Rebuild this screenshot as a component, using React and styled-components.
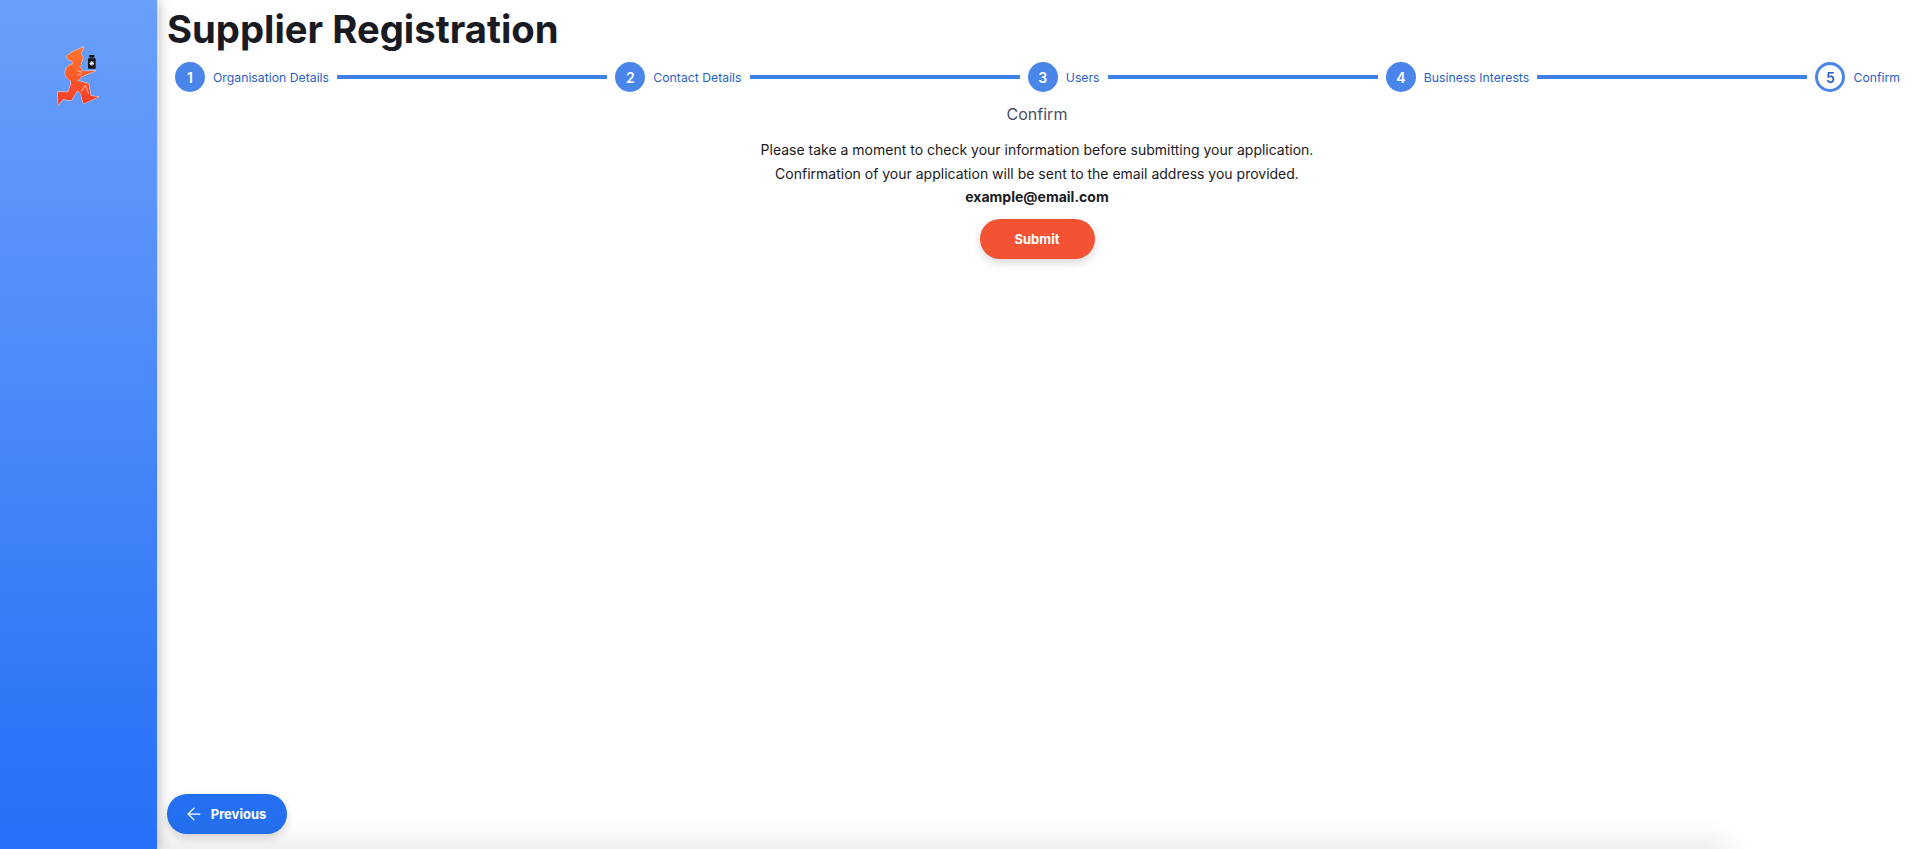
import React from 'react';
import styled, {createGlobalStyle} from 'styled-components';
import {ArrowLeft} from 'lucide-react';

const GlobalStyle = createGlobalStyle`
    html, body {
        margin: 0;
        padding: 0;
        background: white;
        font-family: Inter, "Liberation Sans", sans-serif;
    }
`;

const Page = styled.div`
    position: relative;
    display: flex;
    height: 100vh;
    overflow: hidden;
`;

const Sidebar = styled.aside`
    width: 157px;
    flex-shrink: 0;
    box-sizing: border-box;
    padding: 35px 0 0 40px;
    background: linear-gradient(180deg, #6a9ffa 0%, #2570f7 100%);
    box-shadow: 2px 0 12px rgba(0, 0, 0, 0.25);
    z-index: 2;
`;

const Main = styled.main`
    flex: 1;
    min-width: 0;
    display: flex;
    flex-direction: column;
    padding: 0 13px 15px 10px;
`;

const Title = styled.h1`
    margin: 6px 0 0;
    font-size: 38.25px;
    line-height: 46px;
    font-weight: 700;
    color: #1a1a23;
`;

const Stepper = styled.div`
    display: flex;
    align-items: center;
    height: 30px;
    margin-top: 10px;
    padding-left: 8px;
`;

const Circle = styled.div`
    width: 30px;
    height: 30px;
    flex-shrink: 0;
    box-sizing: border-box;
    border-radius: 50%;
    display: flex;
    align-items: center;
    justify-content: center;
    font-size: 14px;
    font-weight: 600;
    color: ${p => p.active ? '#2a5fc9' : 'white'};
    background: ${p => p.active ? 'white' : '#4a85ea'};
    border: ${p => p.active ? '3px solid #4a85ea' : 'none'};
`;

const StepLabel = styled.span`
    margin-left: 8px;
    font-size: 12.25px;
    color: #2a5fc9;
    white-space: nowrap;
`;

const Connector = styled.div`
    flex: 1;
    height: 4px;
    margin: 0 8px;
    background: #4280e8;
`;

const Content = styled.section`
    display: flex;
    flex-direction: column;
    align-items: center;
    flex: 1;
    padding-left: 7px;
`;

const Heading = styled.h2`
    margin: 10px 0 0;
    font-size: 16px;
    line-height: 24px;
    font-weight: 400;
    color: #4a4d68;
`;

const Message = styled.p`
    margin: ${p => p.first ? '12px' : '0'} 0 0;
    font-size: 14px;
    line-height: 24px;
    color: #1a1a23;
`;

const Email = styled.p`
    margin: -1px 0 0;
    font-size: 14px;
    line-height: 24px;
    font-weight: 700;
    color: #1a1a23;
`;

const PillButton = styled.button`
    height: 40px;
    border: none;
    border-radius: 20px;
    display: flex;
    align-items: center;
    justify-content: center;
    font-family: inherit;
    font-size: 13px;
    font-weight: 700;
    color: white;
    background: ${p => p.color};
    box-shadow: 0 4px 10px rgba(0, 0, 0, 0.15);
`;

const SubmitButton = styled(PillButton)`
    width: 115px;
    margin-top: 10px;
`;

const PreviousButton = styled(PillButton)`
    width: 120px;
    gap: 7px;
    padding: 0 10px 0 6px;
    align-self: flex-start;
`;

const BottomShadow = styled.div`
    position: absolute;
    left: 0;
    bottom: -12px;
    width: 1730px;
    height: 12px;
    border-radius: 0 12px 0 0;
    box-shadow: 0 0 30px rgba(0, 0, 0, 0.22);
`;

const RunnerShapes = () => (
    <>
        <path d="M94 132 L146 146 L152 182 L176 186 L130 206 L122 176 L112 166 L94 196 L68 193 L55 211 L53 170 L84 172 L92 150 Z" />
        <circle cx="101" cy="113" r="26" />
        <path d="M112 100 L132 109 L167 107 L134 121 L112 130 Z" />
        <path d="M79 63 L100 49 L132 35 L123 56 L129 68 L122 92 L98 94 L97 78 L84 74 Z" />
    </>
);

const Logo = () => (
    <svg width="70" height="80" viewBox="0 0 210 240">
        <defs>
            <linearGradient id="logoFill" gradientUnits="userSpaceOnUse" x1="0" y1="35" x2="0" y2="210">
                <stop offset="0" stopColor="#ff7a2e" />
                <stop offset="1" stopColor="#f63a28" />
            </linearGradient>
        </defs>
        <g fill="none" stroke="#f3d9d0" strokeWidth="3" strokeLinejoin="round">
            <RunnerShapes />
        </g>
        <g fill="url(#logoFill)">
            <RunnerShapes />
        </g>
        <path d="M110 106 L126 112 M112 120 L126 117 M136 150 L124 170 M136 150 L146 176" stroke="#ffe4da" strokeWidth="2" fill="none" />
        <rect x="148" y="60" width="15" height="8" fill="#151515" />
        <rect x="144" y="70" width="23" height="31" rx="3" fill="#151515" />
        <path d="M155.500 78 v14 M148.500 85 h14 M150.500 80 l10 10 M160.500 80 l-10 10" stroke="white" strokeWidth="3" />
    </svg>
);

const steps = ['Organisation Details', 'Contact Details', 'Users', 'Business Interests', 'Confirm'];

export default function App(){
    return (
        <Page>
            <GlobalStyle />
            <Sidebar>
                <Logo />
            </Sidebar>
            <Main>
                <Title>Supplier Registration</Title>
                <Stepper>
                    {steps.map((step, i) => (
                        <React.Fragment key={step}>
                            <Circle active={i === steps.length - 1}>{i + 1}</Circle>
                            <StepLabel>{step}</StepLabel>
                            {i < steps.length - 1 && <Connector />}
                        </React.Fragment>
                    ))}
                </Stepper>
                <Content>
                    <Heading>Confirm</Heading>
                    <Message first>Please take a moment to check your information before submitting your application.</Message>
                    <Message>Confirmation of your application will be sent to the email address you provided.</Message>
                    <Email>example@email.com</Email>
                    <SubmitButton color="#f35233">Submit</SubmitButton>
                </Content>
                <PreviousButton color="#2570f0">
                    <ArrowLeft size={20} strokeWidth={1.5} />
                    Previous
                </PreviousButton>
            </Main>
            <BottomShadow />
        </Page>
    );
}
